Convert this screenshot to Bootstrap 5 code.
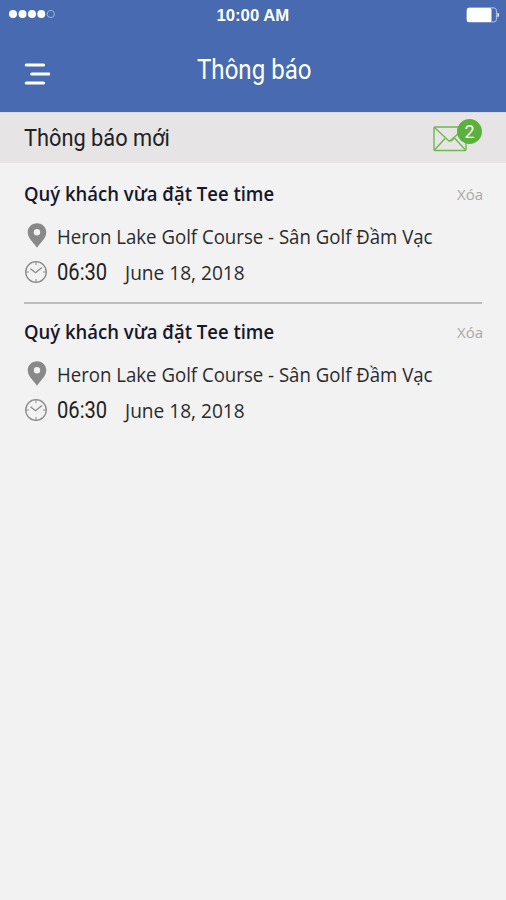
<!DOCTYPE html>
<html lang="vi">
<head>
<meta charset="utf-8">
<meta name="viewport" content="width=device-width, initial-scale=1">
<title>Thông báo</title>
<link href="https://cdn.jsdelivr.net/npm/bootstrap@5.3.0/dist/css/bootstrap.min.css" rel="stylesheet">
<style>
body{background:#f2f2f2;font-family:"Open Sans","Noto Sans",sans-serif;color:#2b2b2d;min-height:900px;overflow:hidden}
svg{display:block;flex:none}
.app-head{background:#486ab0;height:112px;color:#fff}
.status{height:30px;padding:0 7px 0 7px}
.status > *{flex:1 1 0}
.clock-label{font:700 16px/30px "Liberation Sans",Arial,sans-serif;text-align:center;padding-top:1px}
.clock-label .fit{transform:scaleX(1.045);transform-origin:50% 50%}
.bar{height:82px;padding:5px 24px 0 23px}
.fit{display:inline-block;white-space:nowrap;transform-origin:0 50%}
.page-title{font:400 27px/32px Roboto,sans-serif;width:114px;margin-bottom:7px}
.page-title .fit{transform:scaleX(.892)}
.section-bar{background:#e6e4e4;height:51px;padding:0 23px 0 24px;border-top:1px solid #d8dae4}
.section-title{font:400 24px/30px Roboto,sans-serif;color:#222}
.section-title .fit{transform:scaleX(.908)}
.mail{width:50px;height:34px;margin-bottom:4px}
.count{position:absolute;right:1px;top:0;width:25px;height:25px;background:#5ab13c;color:#fff;font:400 18px/25px Roboto,sans-serif}
.notice{height:138px;margin:0 24px;padding-top:14px}
.notice:first-child{height:141px;padding-top:17px;border-bottom:2px solid #bdbdbd}
.notice-head{height:28px}
.notice-title{font-size:19px;font-weight:600;line-height:28px;color:#16172b;transform:scaleX(.973)}
.remove{font-size:15px;line-height:29px;color:#a8a8a8;font-weight:400;margin-right:-1px}
.place{height:36px;margin-top:11px;font-size:20px}
.place .glyph{padding-bottom:4px}
.place-name{transform:scaleX(.931)}
.when{height:35px;font-size:20px}
.when .glyph{padding-bottom:2px}
.date{transform:scaleX(.955)}
.glyph{width:25px;margin-right:8px}
.hour{width:68px;font:400 24px/35px Roboto,sans-serif;color:#222}
.hour .fit{transform:scaleX(.84)}
</style>
<script src="https://cdn.jsdelivr.net/npm/bootstrap@5.3.0/dist/js/bootstrap.bundle.min.js"></script>
</head>
<body>
<svg width="0" height="0" class="d-none">
<symbol id="pin" viewBox="0 0 20 25"><path fill="#898989" fill-rule="evenodd" d="M10 .3C4.600.3.7 4.300.7 9.300c0 5.700 5.300 9.700 9.300 15.400 4-5.700 9.300-9.700 9.300-15.400 0-5-3.900-9-9.300-9Zm0 5.700a3.200 3.200 0 1 1 0 6.400 3.200 3.200 0 0 1 0-6.400Z"/></symbol>
<symbol id="clock" viewBox="0 0 24 24"><g fill="none" stroke="#8b8b8b"><circle cx="12" cy="12" r="10.300" stroke-width="1.300"/><path d="M6.500 8.800 11.500 12.700 18 7.500" stroke-width="1.400"/><path d="M12 2v3M12 19v3M2 12h3M19 12h3"/></g></symbol>
</svg>
<header class="app-head">
  <div class="status d-flex align-items-center">
    <div><svg width="50" height="12" viewBox="-2 0 50 12"><g fill="#fff"><circle cx="4" cy="5" r="4"/><circle cx="13.500" cy="5" r="4"/><circle cx="23" cy="5" r="4"/><circle cx="32.300" cy="5" r="4"/></g><circle cx="41.800" cy="5" r="3.600" fill="none" stroke="#a9bbe0" stroke-width=".9"/></svg></div>
    <div class="clock-label"><span class="fit">10:00 AM</span></div>
    <div class="d-flex justify-content-end"><svg width="33" height="16" viewBox="0 0 33 16"><rect x=".9" y=".9" width="29.500" height="14" rx="2.500" fill="none" stroke="#b9c8e8"/><rect x="1" y="1" width="24.500" height="14" rx="1.500" fill="#fff"/><path d="M31.500 5.500c2 1 2 4 0 5Z" fill="#fff"/></svg></div>
  </div>
  <div class="bar d-flex align-items-center justify-content-between">
    <svg width="27" height="26" viewBox="0 0 27 26"><path d="M3.300 4h17.200M8.800 13h17M3.300 22h17.200" stroke="#fff" stroke-width="3.200" stroke-linecap="round"/></svg>
    <div class="page-title"><span class="fit">Thông báo</span></div>
    <span class="glyph me-0"></span>
  </div>
</header>
<div class="section-bar d-flex justify-content-between align-items-center">
  <div class="section-title"><span class="fit">Thông báo mới</span></div>
  <div class="mail position-relative">
    <svg width="35" height="34" viewBox="0 0 35 34"><g fill="none" stroke="#6fb950" stroke-width="1.400" stroke-linejoin="round"><rect x="1" y="8" width="32" height="23.500" rx="1"/><path d="M1.500 8.500 16.200 22.200l1.800-1.200L32.500 8.500M1.500 31 12 19.500M32.500 31 21.500 19l-3 2.800h-2.200"/></g></svg>
    <span class="count rounded-circle text-center">2</span>
  </div>
</div>
<main>
  <article class="notice">
    <div class="notice-head d-flex justify-content-between"><span class="notice-title fit">Quý khách vừa đặt Tee time</span><span class="remove">Xóa</span></div>
    <div class="place d-flex align-items-center"><span class="glyph d-flex justify-content-center"><svg width="20" height="25"><use href="#pin"/></svg></span><span class="fit place-name">Heron Lake Golf Course - Sân Golf Đầm Vạc</span></div>
    <div class="when d-flex align-items-center"><span class="glyph"><svg width="24" height="24"><use href="#clock"/></svg></span><span class="hour"><span class="fit">06:30</span></span><span class="fit date">June 18, 2018</span></div>
  </article>
  <article class="notice">
    <div class="notice-head d-flex justify-content-between"><span class="notice-title fit">Quý khách vừa đặt Tee time</span><span class="remove">Xóa</span></div>
    <div class="place d-flex align-items-center"><span class="glyph d-flex justify-content-center"><svg width="20" height="25"><use href="#pin"/></svg></span><span class="fit place-name">Heron Lake Golf Course - Sân Golf Đầm Vạc</span></div>
    <div class="when d-flex align-items-center"><span class="glyph"><svg width="24" height="24"><use href="#clock"/></svg></span><span class="hour"><span class="fit">06:30</span></span><span class="fit date">June 18, 2018</span></div>
  </article>
</main>
</body>
</html>
